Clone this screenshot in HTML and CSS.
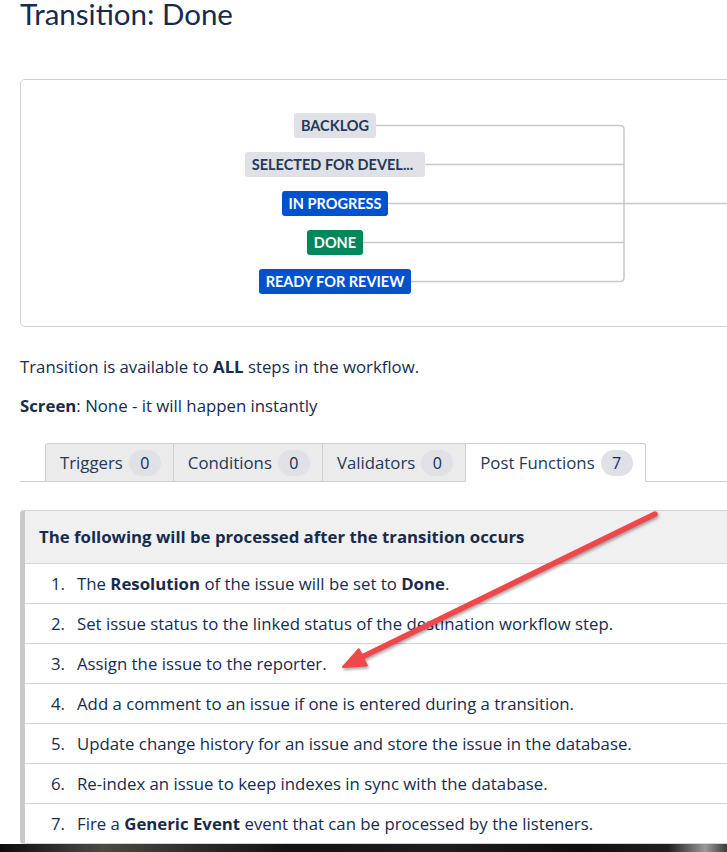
FILE: index.html
```html
<!DOCTYPE html>
<html lang="en">
<head>
    <meta charset="UTF-8" />
    <title>Transition: Done</title>
    <link rel="stylesheet" href="styles.css">
</head>
<body>

<h1 class="page-title">Transition: Done</h1>

<!-- Схема переходов -->
<div class="diagram">
    <svg class="diagram-lines" width="760" height="246" viewBox="0 0 760 246">
        <path d="M314 45.5 H599 Q603 45.5 603 49.5 V197.5 Q603 201.5 599 201.5 H314" />
        <path d="M314 84.5 H603" />
        <path d="M314 123.5 H760" />
        <path d="M314 162.5 H603" />
    </svg>
    <div class="steps">
        <span class="lozenge">Backlog</span>
        <span class="lozenge lozenge-cut">Selected for Devel...</span>
        <span class="lozenge lozenge-blue">In Progress</span>
        <span class="lozenge lozenge-green">Done</span>
        <span class="lozenge lozenge-blue">Ready for Review</span>
    </div>
</div>

<p class="info">Transition is available to <b>ALL</b> steps in the workflow.</p>
<p class="info info-screen"><b>Screen</b>: None - it will happen instantly</p>

<ul class="tabs">
    <li class="tab">Triggers <span class="count">0</span></li>
    <li class="tab">Conditions <span class="count">0</span></li>
    <li class="tab">Validators <span class="count">0</span></li>
    <li class="tab tab-active">Post Functions <span class="count">7</span></li>
</ul>

<div class="panel">
    <div class="panel-head">The following will be processed after the transition occurs</div>
    <ol class="functions">
        <li>The <b>Resolution</b> of the issue will be set to <b>Done</b>.</li>
        <li>Set issue status to the linked status of the destination workflow step.</li>
        <li>Assign the issue to the reporter.</li>
        <li>Add a comment to an issue if one is entered during a transition.</li>
        <li>Update change history for an issue and store the issue in the database.</li>
        <li>Re-index an issue to keep indexes in sync with the database.</li>
        <li>Fire a <b>Generic Event</b> event that can be processed by the listeners.</li>
    </ol>
</div>

<div class="desktop-strip"></div>

<!-- Красная стрелка поверх скриншота -->
<svg class="annotation" width="727" height="852" viewBox="0 0 727 852">
    <line x1="655" y1="514" x2="360" y2="658" />
    <polygon points="343,667 358.8,649.2 366.8,665.4" />
</svg>

</body>
</html>
```

FILE: styles.css
```css
html, body {
    overflow: hidden;
}

body {
    position: relative;
    margin: 0;
    padding: 0 20px;
    font-family: "Open Sans", Lato, sans-serif;
    font-size: 16.8px;
    color: #172b4d;
    background: #fff;
}

.page-title {
    margin: 0;
    font-family: Lato, "Open Sans", sans-serif;
    font-size: 29.5px;
    line-height: 28px;
    font-weight: 400;
    color: #172b4d;
}

/* схема */
.diagram {
    position: relative;
    width: 760px;
    height: 246px;
    margin-top: 51px;
    border: 1px solid #d0d0d0;
    border-radius: 5px;
}

.diagram-lines {
    position: absolute;
    left: 0;
    top: 0;
}

.diagram-lines path {
    fill: none;
    stroke: #c8c8c8;
    stroke-width: 1.5;
}

.steps {
    position: relative;
    width: 628px;
    padding-top: 33px;
    display: flex;
    flex-direction: column;
    align-items: center;
    gap: 14px;
}

.lozenge {
    height: 25px;
    line-height: 25px;
    padding: 0 7px;
    border-radius: 3px;
    background: #dfe1e6;
    color: #253858;
    font-family: Lato, "Open Sans", sans-serif;
    font-size: 14.5px;
    font-weight: 700;
    text-transform: uppercase;
    white-space: nowrap;
}

.lozenge-cut {
    padding-right: 12px;
}

.lozenge-blue {
    background: #0052cc;
    color: #fff;
}

.lozenge-green {
    background: #00875a;
    color: #fff;
}

/* текст */
.info {
    margin: 30px 0 0;
    line-height: 20px;
}

.info-screen {
    margin-top: 19px;
}

/* вкладки */
.tabs {
    display: flex;
    margin: 27px -20px 0 0;
    padding: 0 0 0 25px;
    list-style: none;
    border-bottom: 1px solid #cfcfcf;
}

.tab {
    display: flex;
    align-items: center;
    gap: 6px;
    height: 37px;
    padding: 0 12px 0 14px;
    margin-bottom: -1px;
    background: #ebebeb;
    border: 1px solid #cfcfcf;
    border-left: none;
    color: #253858;
}

.tab:first-child {
    border-left: 1px solid #cfcfcf;
    border-top-left-radius: 3px;
}

.tab-active {
    background: #fff;
    border-bottom: 1px solid #fff;
    border-top-right-radius: 3px;
}

.count {
    display: inline-block;
    min-width: 32px;
    height: 26px;
    line-height: 26px;
    border-radius: 13px;
    background: #dfe1e6;
    text-align: center;
    font-size: 16px;
    color: #172b4d;
}

/* пост-функции */
.panel {
    margin: 28px -20px 0 0;
    border-top: 1px solid #d6d6d6;
    border-left: 5px solid #c8c8c8;
    border-bottom: 1px solid #d6d6d6;
    border-radius: 4px 0 0 4px;
}

.panel-head {
    height: 52px;
    line-height: 52px;
    padding-left: 14px;
    background: #f0f0f0;
    font-weight: 700;
}

.functions {
    margin: 0;
    padding: 0;
    list-style: none;
    counter-reset: step;
}

.functions li {
    height: 39px;
    line-height: 39px;
    padding-left: 26px;
    border-top: 1px solid #d6d6d6;
    counter-increment: step;
}

.functions li::before {
    content: counter(step) ".";
    display: inline-block;
    width: 26px;
}

.desktop-strip {
    height: 20px;
    margin: 0 -20px;
    background: linear-gradient(90deg, #0c0c0c 0%, #262626 6%, #4a4a44 14%, #2e2e2a 26%, #121212 40%, #1e1e1e 60%, #0e0e0e 80%, #202020 92%, #9a9a9a 97%, #3a3a3a 100%);
}

/* стрелка */
.annotation {
    position: absolute;
    left: 0;
    top: 0;
    pointer-events: none;
    filter: drop-shadow(1px 2px 1.5px rgba(0, 0, 0, 0.35));
}

.annotation line {
    stroke: #f0484a;
    stroke-width: 5.5;
    stroke-linecap: round;
}

.annotation polygon {
    fill: #f0484a;
    stroke: #f0484a;
    stroke-width: 2;
    stroke-linejoin: round;
}
```
